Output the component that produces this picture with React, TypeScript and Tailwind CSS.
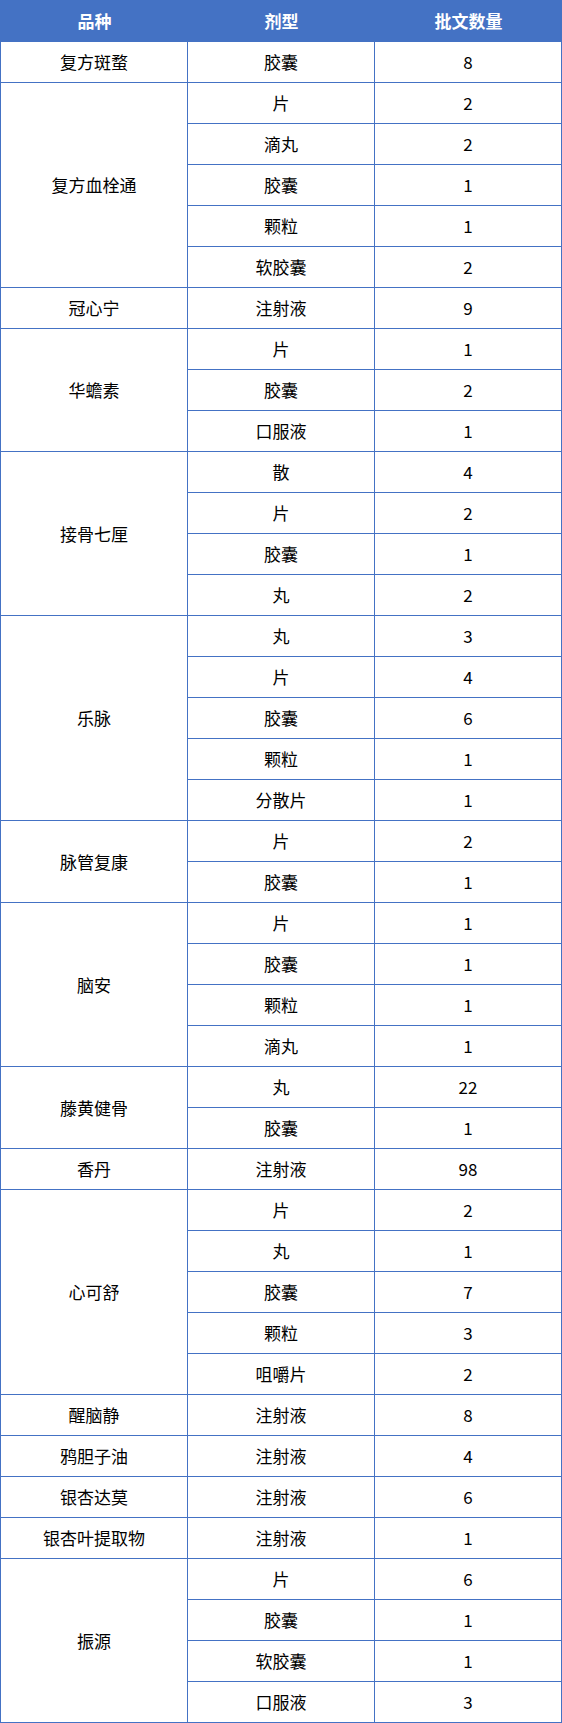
import React from "react";

interface Group {
  name: string;
  items: [string, number][];
}

const groups: Group[] = [
  { name: "复方斑蝥", items: [["胶囊", 8]] },
  {
    name: "复方血栓通",
    items: [
      ["片", 2],
      ["滴丸", 2],
      ["胶囊", 1],
      ["颗粒", 1],
      ["软胶囊", 2],
    ],
  },
  { name: "冠心宁", items: [["注射液", 9]] },
  {
    name: "华蟾素",
    items: [
      ["片", 1],
      ["胶囊", 2],
      ["口服液", 1],
    ],
  },
  {
    name: "接骨七厘",
    items: [
      ["散", 4],
      ["片", 2],
      ["胶囊", 1],
      ["丸", 2],
    ],
  },
  {
    name: "乐脉",
    items: [
      ["丸", 3],
      ["片", 4],
      ["胶囊", 6],
      ["颗粒", 1],
      ["分散片", 1],
    ],
  },
  {
    name: "脉管复康",
    items: [
      ["片", 2],
      ["胶囊", 1],
    ],
  },
  {
    name: "脑安",
    items: [
      ["片", 1],
      ["胶囊", 1],
      ["颗粒", 1],
      ["滴丸", 1],
    ],
  },
  {
    name: "藤黄健骨",
    items: [
      ["丸", 22],
      ["胶囊", 1],
    ],
  },
  { name: "香丹", items: [["注射液", 98]] },
  {
    name: "心可舒",
    items: [
      ["片", 2],
      ["丸", 1],
      ["胶囊", 7],
      ["颗粒", 3],
      ["咀嚼片", 2],
    ],
  },
  { name: "醒脑静", items: [["注射液", 8]] },
  { name: "鸦胆子油", items: [["注射液", 4]] },
  { name: "银杏达莫", items: [["注射液", 6]] },
  { name: "银杏叶提取物", items: [["注射液", 1]] },
  {
    name: "振源",
    items: [
      ["片", 6],
      ["胶囊", 1],
      ["软胶囊", 1],
      ["口服液", 3],
    ],
  },
];

const spanClass: Record<number, string> = {
  1: "row-span-1",
  2: "row-span-2",
  3: "row-span-3",
  4: "row-span-4",
  5: "row-span-5",
};

const cell =
  "flex items-center justify-center border-r border-b border-[#4472c4] text-[17px] text-black";

const head =
  "flex items-center justify-center bg-[#4472c4] text-[17px] font-bold text-white";

export default function App() {
  return (
    <div
      className="w-[562px] bg-white"
      style={{ fontFamily: '"Noto Sans CJK SC", "Noto Sans", sans-serif' }}
    >
      <div className="grid grid-cols-[187px_187px_187px] grid-rows-[42px] auto-rows-[41px] border-l border-[#4472c4]">
        <div className={head}>品种</div>
        <div className={head}>剂型</div>
        <div className={head}>批文数量</div>
        {groups.map((g) => (
          <React.Fragment key={g.name}>
            <div className={`${cell} col-start-1 ${spanClass[g.items.length]}`}>
              {g.name}
            </div>
            {g.items.map(([form, count], i) => (
              <React.Fragment key={i}>
                <div className={`${cell} col-start-2`}>{form}</div>
                <div className={`${cell} col-start-3`}>{count}</div>
              </React.Fragment>
            ))}
          </React.Fragment>
        ))}
      </div>
    </div>
  );
}
